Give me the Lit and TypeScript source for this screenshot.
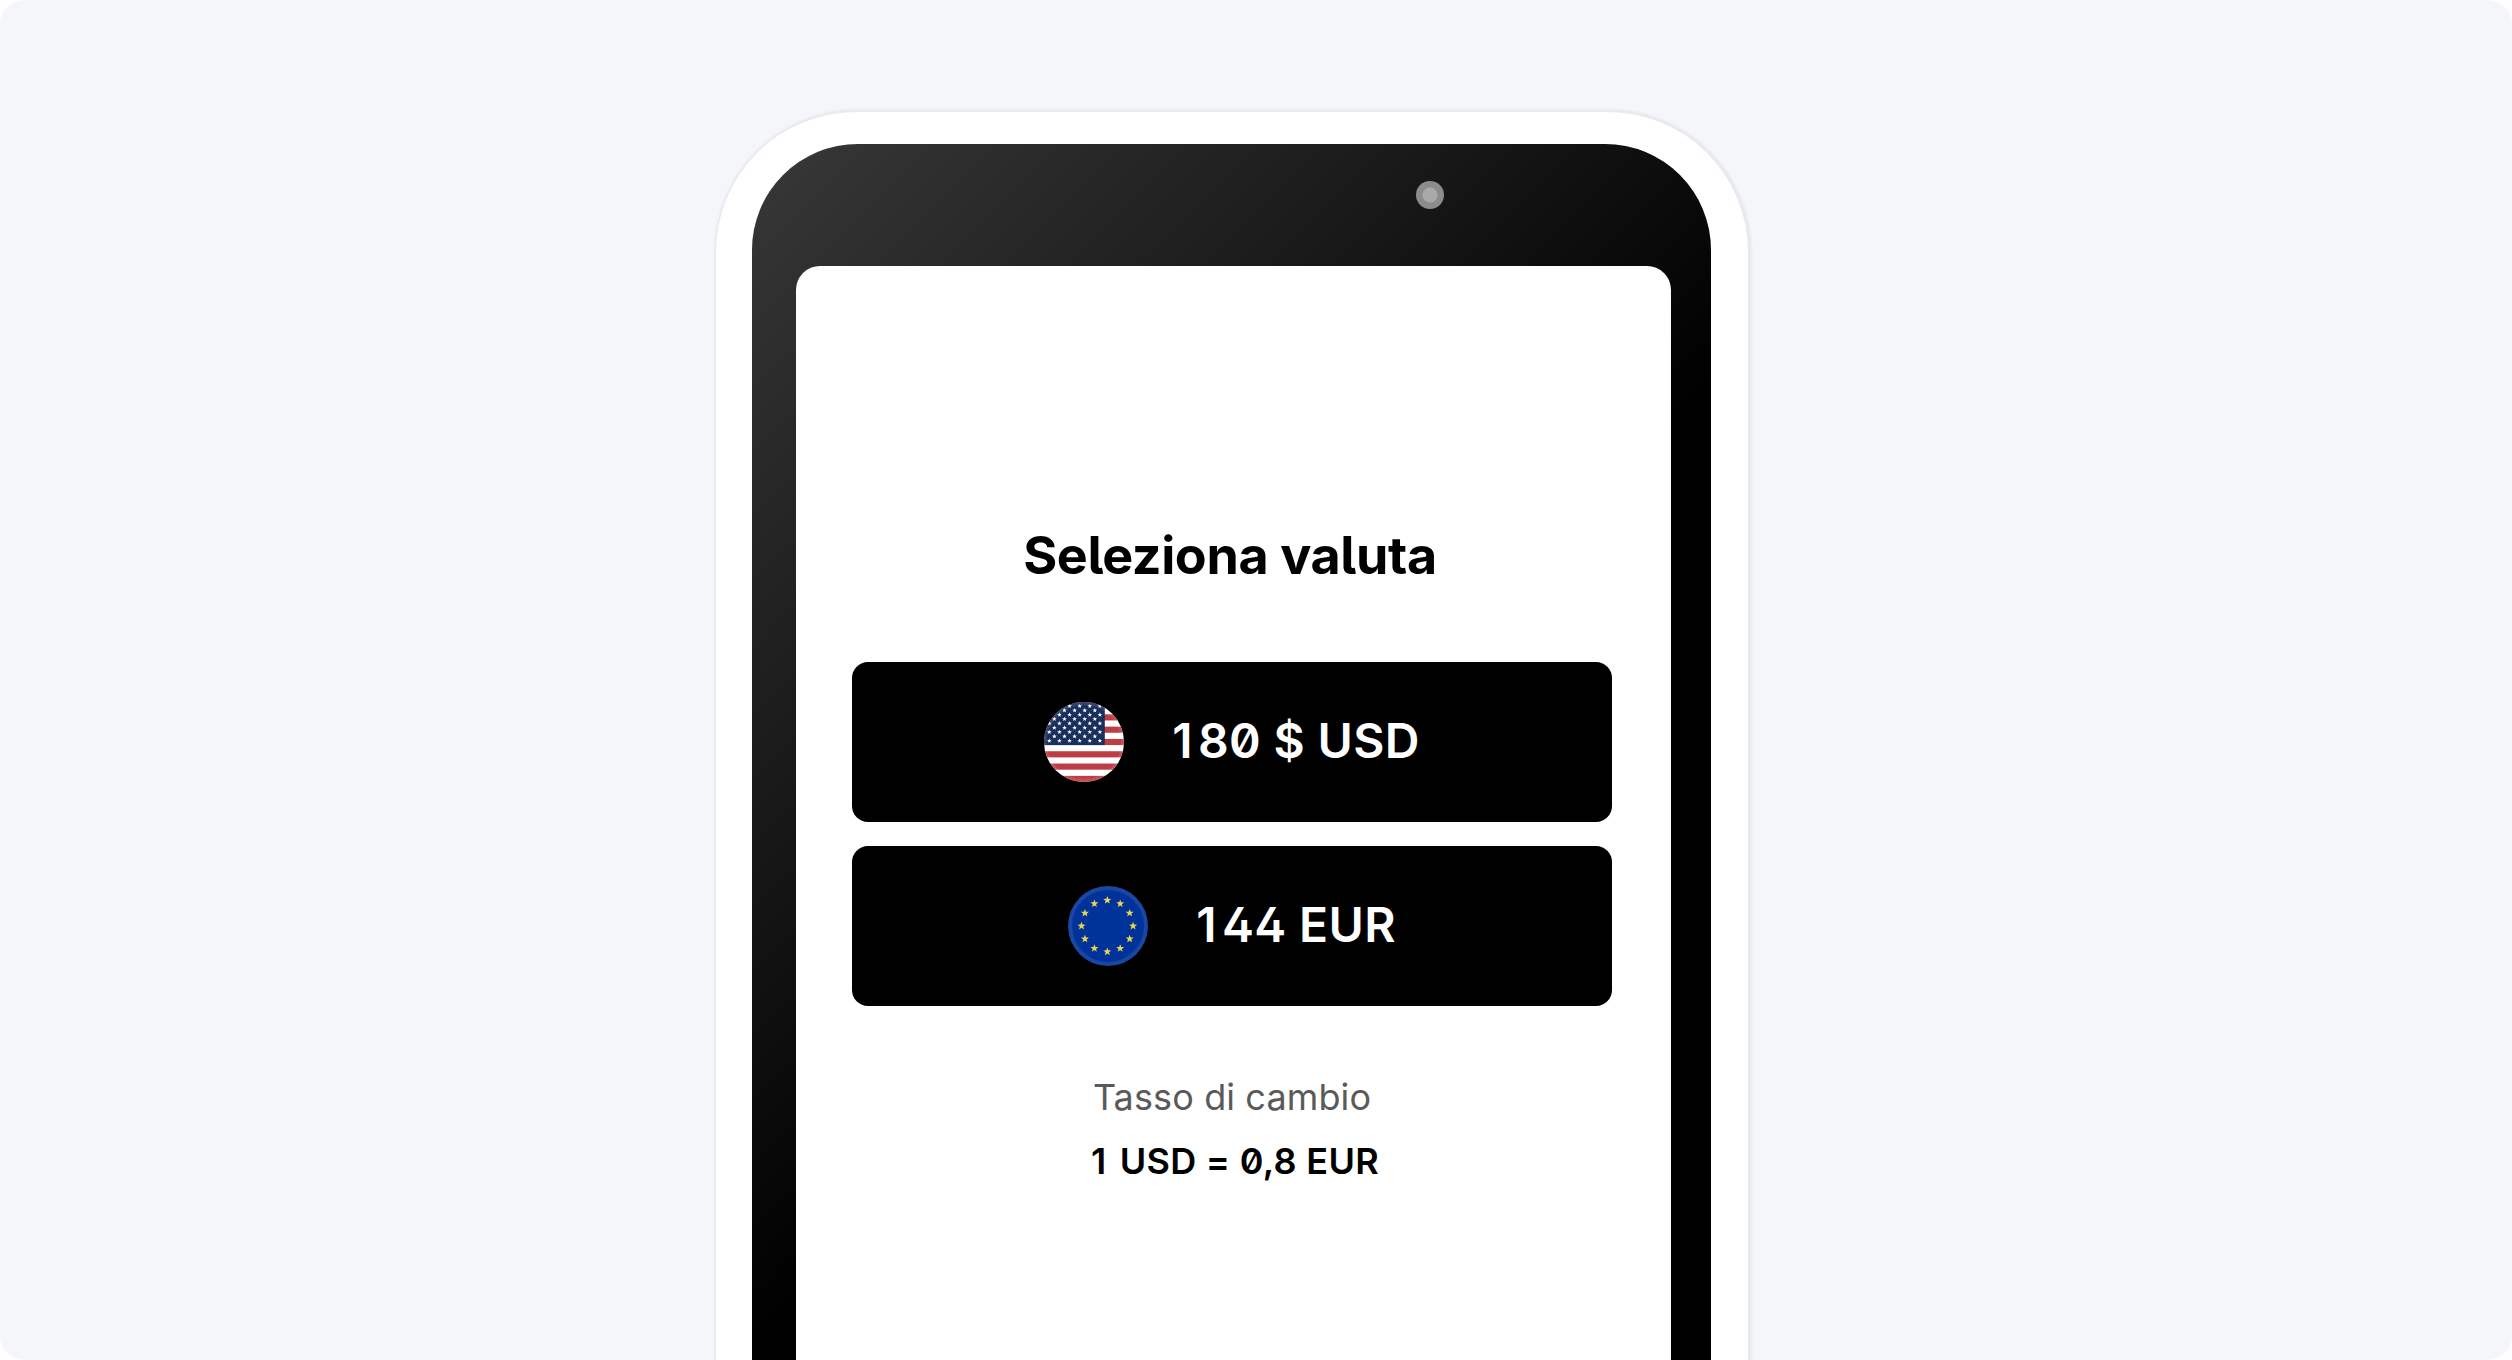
import { LitElement, html, svg, css } from "lit";
import { customElement } from "lit/decorators.js";

const starPoints = (cx: number, cy: number, r: number): string =>
  Array.from({ length: 10 }, (_, i) => {
    const a = (Math.PI / 5) * i - Math.PI / 2;
    const d = i % 2 ? r * 0.42 : r;
    return `${(cx + d * Math.cos(a)).toFixed(2)},${(cy + d * Math.sin(a)).toFixed(2)}`;
  }).join(" ");

@customElement("flag-us")
class FlagUs extends LitElement {
  static styles = css`
    :host { display: block; width: 80px; height: 80px; }
    svg { display: block; }
  `;
  render() {
    const h = 80 / 13;
    const stars = [];
    for (let row = 0; row < 9; row++) {
      const odd = row % 2;
      for (let col = 0; col < (odd ? 5 : 6); col++) {
        stars.push(svg`<polygon fill="#fff" points=${starPoints(5.3 + 10.12 * col + (odd ? 5.06 : 0), 4.1 + 4.33 * row, 2.4)} />`);
      }
    }
    return html`<svg width="80" height="80" viewBox="0 0 80 80">
      <defs><clipPath id="c"><circle cx="40" cy="40" r="40" /></clipPath></defs>
      <g clip-path="url(#c)">
        <rect width="80" height="80" fill="#fff" />
        ${[0, 2, 4, 6, 8, 10, 12].map((i) => svg`<rect y=${i * h} width="80" height=${h} fill="#bd3d44" />`)}
        <rect width="60.8" height=${h * 7} fill="#192f5d" />
        ${stars}
        <circle cx="40" cy="40" r="38.5" fill="none" stroke="#fff" stroke-opacity="0.1" stroke-width="3" />
      </g>
    </svg>`;
  }
}

@customElement("flag-eu")
class FlagEu extends LitElement {
  static styles = css`
    :host { display: block; width: 80px; height: 80px; }
    svg { display: block; }
  `;
  render() {
    return html`<svg width="80" height="80" viewBox="0 0 80 80">
      <circle cx="40" cy="40" r="40" fill="#039" />
      <circle cx="40" cy="40" r="38" fill="none" stroke="#fff" stroke-opacity="0.1" stroke-width="4" />
      ${Array.from({ length: 12 }, (_, i) => {
        const a = (Math.PI / 6) * i;
        return svg`<polygon fill="#e8d454" points=${starPoints(39.3 + 25.8 * Math.sin(a), 40 - 25.8 * Math.cos(a), 4.2)} />`;
      })}
    </svg>`;
  }
}

@customElement("app-root")
class AppRoot extends LitElement {
  static styles = css`
    :host {
      display: block;
      background: #fff;
      font-family: Inter, "Liberation Sans", sans-serif;
      font-feature-settings: "zero", "cv05", "cv02";
      color: #000;
    }
    .card {
      box-sizing: border-box;
      height: 1360px;
      padding: 112px 764px 0 716px;
      border-radius: 24px;
      background: #f4f6fa;
      overflow: hidden;
    }
    .phone {
      box-sizing: border-box;
      height: 1500px;
      padding: 32px 37px 0 36px;
      border-radius: 140px;
      background: #fff;
      box-shadow: 1px 0 2px 3px rgba(0, 0, 0, 0.05);
    }
    .body {
      box-sizing: border-box;
      height: 1460px;
      padding: 0 40px 0 44px;
      border-radius: 106px;
      background: linear-gradient(135deg, #383838 0%, #000 50%);
    }
    .bezel {
      box-sizing: border-box;
      height: 122px;
      padding: 37px 227px 0 0;
      display: flex;
      justify-content: flex-end;
    }
    .camera {
      width: 28px;
      height: 28px;
      border-radius: 50%;
      background: radial-gradient(circle, #a9a9a9 0 7px, #8c8c8c 8px);
    }
    .screen {
      box-sizing: border-box;
      height: 1300px;
      padding: 258px 59px 0 56px;
      border-radius: 24px;
      background: #fff;
      display: flex;
      flex-direction: column;
      align-items: stretch;
      text-align: center;
    }
    .title {
      margin: 0 4px 74px 0;
      font-size: 52px;
      line-height: 64px;
      font-weight: 700;
      letter-spacing: -0.36px;
      white-space: nowrap;
    }
    .options { display: flex; flex-direction: column; gap: 24px; }
    .option {
      height: 160px;
      border-radius: 16px;
      background: #000;
      color: #fff;
      display: flex;
      align-items: center;
      justify-content: center;
      gap: 48px;
      font-size: 48px;
      line-height: 58px;
      font-weight: 600;
      letter-spacing: 0.35px;
      white-space: nowrap;
    }
    .amount { padding-bottom: 2px; }
    .one { letter-spacing: 5.5px; }
    .rate-label { margin-top: 69px; font-size: 36px; line-height: 44px; letter-spacing: 0.12px; color: #5a5a5a; }
    .rate { margin: 20px 0 0 6px; font-size: 36px; line-height: 44px; font-weight: 600; letter-spacing: 0.3px; }
    .rate .one { letter-spacing: 4px; }
  `;
  render() {
    return html`<div class="card">
      <div class="phone">
        <div class="body">
          <div class="bezel"><div class="camera"></div></div>
          <div class="screen">
            <div class="title">Seleziona valuta</div>
            <div class="options">
              <div class="option"><flag-us></flag-us><span class="amount"><span class="one">1</span>80 $ USD</span></div>
              <div class="option"><flag-eu></flag-eu><span class="amount"><span class="one">1</span>44 EUR</span></div>
            </div>
            <div class="rate-label">Tasso di cambio</div>
            <div class="rate"><span class="one">1</span> USD = 0,8 EUR</div>
          </div>
        </div>
      </div>
    </div>`;
  }
}
